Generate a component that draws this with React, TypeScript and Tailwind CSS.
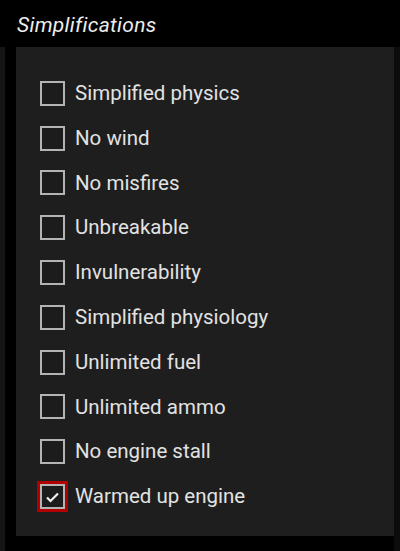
const OPTIONS = [
  { label: 'Simplified physics', checked: false },
  { label: 'No wind', checked: false },
  { label: 'No misfires', checked: false },
  { label: 'Unbreakable', checked: false },
  { label: 'Invulnerability', checked: false },
  { label: 'Simplified physiology', checked: false },
  { label: 'Unlimited fuel', checked: false },
  { label: 'Unlimited ammo', checked: false },
  { label: 'No engine stall', checked: false },
  { label: 'Warmed up engine', checked: true },
]

function Checkbox({ checked }: { checked: boolean }) {
  return (
    <div
      className={
        checked
          ? 'flex h-[25px] w-[25px] items-center justify-center border-2 border-[#b4b4b4] bg-[#1c1c1c] shadow-[0_0_0_3px_#b10000]'
          : 'flex h-[25px] w-[25px] items-center justify-center border-2 border-[#b4b4b4] bg-[#1c1c1c]'
      }
    >
      {checked && (
        <svg width="15" height="12" viewBox="0 0 15 12" fill="none">
          <path d="M2 6.5 L5.5 10 L13 2.5" stroke="#f0f0f0" strokeWidth="2.2" />
        </svg>
      )}
    </div>
  )
}

export default function App() {
  return (
    <div
      className="flex h-[551px] w-[400px] flex-col bg-black text-[#e2e2e2]"
      style={{ fontFamily: 'Roboto, "Noto Sans", sans-serif' }}
    >
      <div className="flex h-[47px] items-center pl-[17px]">
        <h2 className="pt-[4px] text-[21px] italic tracking-[0.3px] text-[#ededed]">Simplifications</h2>
      </div>
      <div className="flex flex-1">
        <div className="w-[5px] bg-[#151515]" />
        <div className="w-[11px] bg-black" />
        <div className="flex h-[489px] w-[378px] flex-col bg-[#1e1e1e] pt-[24px] pl-[24px]">
          {OPTIONS.map((opt) => (
            <label key={opt.label} className="flex h-[44.8px] items-center gap-[10px]">
              <Checkbox checked={opt.checked} />
              <span className="text-[20.5px]">{opt.label}</span>
            </label>
          ))}
        </div>
        <div className="flex-1 bg-[#0c0c0c]" />
      </div>
    </div>
  )
}
